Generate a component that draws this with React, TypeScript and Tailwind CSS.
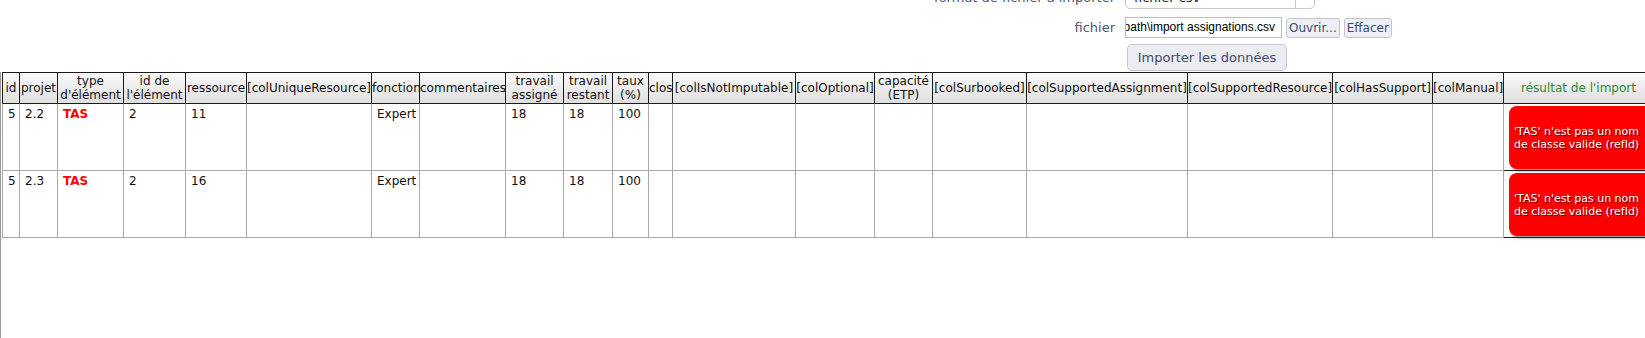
const columns: { label: string[]; width: number; result?: boolean }[] = [
  { label: ['id'], width: 17 },
  { label: ['projet'], width: 38 },
  { label: ['type', "d'élément"], width: 66 },
  { label: ['id de', "l'élément"], width: 62 },
  { label: ['ressource'], width: 61 },
  { label: ['[colUniqueResource]'], width: 125 },
  { label: ['fonction'], width: 48 },
  { label: ['commentaires'], width: 86 },
  { label: ['travail', 'assigné'], width: 58 },
  { label: ['travail', 'restant'], width: 49 },
  { label: ['taux', '(%)'], width: 36 },
  { label: ['clos'], width: 24 },
  { label: ['[colIsNotImputable]'], width: 123 },
  { label: ['[colOptional]'], width: 79 },
  { label: ['capacité', '(ETP)'], width: 58 },
  { label: ['[colSurbooked]'], width: 94 },
  { label: ['[colSupportedAssignment]'], width: 161 },
  { label: ['[colSupportedResource]'], width: 145 },
  { label: ['[colHasSupport]'], width: 100 },
  { label: ['[colManual]'], width: 71 },
  { label: ["résultat de l'import"], width: 150, result: true },
];

const rows = [
  { id: '5', projet: '2.2', type: 'TAS', refId: '2', ressource: '11', fonction: 'Expert', assigne: '18', restant: '18', taux: '100' },
  { id: '5', projet: '2.3', type: 'TAS', refId: '2', ressource: '16', fonction: 'Expert', assigne: '18', restant: '18', taux: '100' },
];

function ImportForm() {
  return (
    <div className="-mt-[13px] grid grid-cols-[1115px_auto] gap-x-[10px] items-center text-[13px] text-[#4a5672] font-['DejaVu_Sans',sans-serif]">
      <div className="text-right leading-[22px]">format de fichier à importer</div>
      <div className="flex h-[22px] w-[190px] items-center rounded-b-[5px] border border-[#c8c8c8] bg-white pl-[8px] text-[#222]">
        <span className="flex-1">fichier csv</span>
        <span className="h-full w-[19px] border-l border-[#c8c8c8]" />
      </div>

      <div className="mt-[8px] text-right">fichier</div>
      <div className="mt-[8px] flex items-center gap-[4px]">
        <div className="flex h-[21px] w-[157px] justify-end overflow-hidden whitespace-nowrap border border-[#bdbdbd] bg-white pr-[6px] text-[12px] leading-[19px] text-black font-['Liberation_Sans',Arial,sans-serif]">
          <span className="shrink-0">path\import assignations.csv</span>
        </div>
        <button className="h-[20px] rounded-[3px] border border-[#c4c4cc] bg-[#eeeff4] px-[2px] text-[12px] leading-[18px] text-[#3e4a68]">
          Ouvrir...
        </button>
        <button className="h-[20px] rounded-[3px] border border-[#c4c4cc] bg-[#eeeff4] px-[2px] text-[12px] leading-[18px] text-[#3e4a68]">
          Effacer
        </button>
      </div>

      <div />
      <div className="mt-[6px]">
        <button className="ml-[2px] h-[27px] w-[160px] rounded-[5px] border border-[#c8c8d2] bg-[#ececf3] text-[13px] text-[#3e4a68]">
          Importer les données
        </button>
      </div>
    </div>
  );
}

function ResultBadge() {
  return (
    <div className="flex h-[63px] w-[150px] items-center rounded-[8px] bg-[#ff0000] pl-[5px] text-[11px] leading-[13px] text-white shadow-[2px_2px_3px_rgba(0,0,0,0.45)] [text-shadow:1px_1px_1px_#5a0000]">
      'TAS' n'est pas un nom
      <br />
      de classe valide (refId)
    </div>
  );
}

function ImportTable() {
  const cell = 'border border-[#a8a8a8] align-top px-[5px] pt-[3px]';
  return (
    <table className="ml-[1px] w-[1651px] table-fixed border-collapse text-[12px] leading-[14px] text-[#111] font-['DejaVu_Sans',Verdana,sans-serif]">
      <colgroup>
        {columns.map((c, i) => (
          <col key={i} style={{ width: c.width }} />
        ))}
      </colgroup>
      <thead>
        <tr className="h-[31px] bg-gradient-to-b from-[#fafafa] to-[#dedede]">
          {columns.map((c, i) => (
            <th
              key={i}
              className={`border border-[#1a1a1a] px-0 text-center font-normal whitespace-nowrap ${c.result ? 'text-[#2e8b3a]' : 'text-[#111]'}`}
            >
              {c.label.map((l, j) => (
                <div key={j}>{l}</div>
              ))}
            </th>
          ))}
        </tr>
      </thead>
      <tbody>
        {rows.map((r, i) => (
          <tr key={i} className="h-[67px]">
            <td className={cell}>{r.id}</td>
            <td className={cell}>{r.projet}</td>
            <td className={`${cell} font-bold text-[#ff0000]`}>{r.type}</td>
            <td className={cell}>{r.refId}</td>
            <td className={cell}>{r.ressource}</td>
            <td className={cell} />
            <td className={cell}>{r.fonction}</td>
            <td className={cell} />
            <td className={cell}>{r.assigne}</td>
            <td className={cell}>{r.restant}</td>
            <td className={cell}>{r.taux}</td>
            <td className={cell} />
            <td className={cell} />
            <td className={cell} />
            <td className={cell} />
            <td className={cell} />
            <td className={cell} />
            <td className={cell} />
            <td className={cell} />
            <td className={cell} />
            <td className="border border-[#1a1a1a] px-[5px] pt-[2px] pb-[1px] align-top">
              <ResultBadge />
            </td>
          </tr>
        ))}
      </tbody>
    </table>
  );
}

export default function App() {
  return (
    <div className="h-[338px] w-full overflow-hidden bg-white">
      <ImportForm />
      <div className="mt-[1px] h-[300px] border-l border-[#9a9a9a]">
        <ImportTable />
      </div>
    </div>
  );
}
